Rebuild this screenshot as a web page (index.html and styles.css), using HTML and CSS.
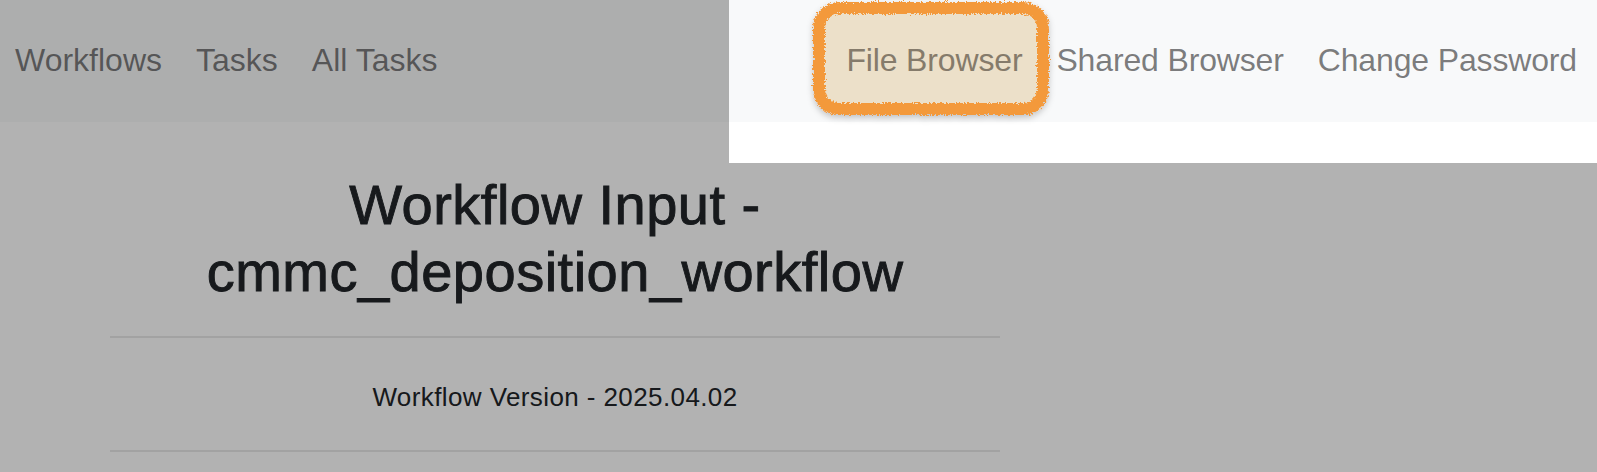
FILE: index.html
```html
<!DOCTYPE html>
<html lang="en">
<head>
<meta charset="utf-8">
<title>Workflow Input</title>
<link rel="stylesheet" href="styles.css">
</head>
<body>
<svg class="defs" width="0" height="0" aria-hidden="true">
  <filter id="rough" x="-10%" y="-15%" width="120%" height="130%">
    <feTurbulence type="fractalNoise" baseFrequency="0.6" numOctaves="2" seed="3" result="noise"/>
    <feDisplacementMap in="SourceGraphic" in2="noise" scale="6" xChannelSelector="R" yChannelSelector="G"/>
  </filter>
</svg>
<nav class="navbar">
  <ul class="nav nav-left">
    <li><a class="nav-link" href="#">Workflows</a></li>
    <li><a class="nav-link" href="#">Tasks</a></li>
    <li><a class="nav-link" href="#">All Tasks</a></li>
  </ul>
  <ul class="nav nav-right">
    <li><a class="nav-link is-highlighted" href="#">File Browser</a></li>
    <li><a class="nav-link" href="#">Shared Browser</a></li>
    <li><a class="nav-link" href="#">Change Password</a></li>
  </ul>
  <div class="spotlight"></div>
</nav>
<main class="content">
  <h1 class="title">Workflow Input - cmmc_deposition_workflow</h1>
  <div class="rule rule-top"></div>
  <p class="version">Workflow Version - 2025.04.02</p>
  <div class="rule rule-bottom"></div>
</main>
</body>
</html>
```
FILE: styles.css
```css
html {
  overflow: hidden;
  background: #ffffff;
}

body {
  margin: 0;
  padding: 0;
  min-height: 472px;
  background: #ffffff;
  font-family: "Liberation Sans", Arial, sans-serif;
  color: #212529;
}

.defs {
  position: absolute;
  width: 0;
  height: 0;
}

.navbar {
  position: relative;
  height: 122px;
  background: #f8f9fa;
  display: flex;
  justify-content: space-between;
  align-items: flex-start;
  padding: 36px 4px 0 0;
  box-sizing: border-box;
}

.nav {
  list-style: none;
  margin: 0;
  padding: 0;
  display: flex;
  gap: 2px;
}

.nav-left {
  margin-left: -1px;
}

.nav-link {
  display: block;
  position: relative;
  z-index: 0;
  padding: 0 16px;
  font-size: 32px;
  line-height: 48px;
  letter-spacing: -0.15px;
  color: rgba(0, 0, 0, 0.52);
  text-decoration: none;
}

.nav-left .nav-link {
  letter-spacing: 0;
}

.is-highlighted {
  color: #857b6b;
  z-index: 2;
}

.is-highlighted::before {
  content: "";
  position: absolute;
  left: -17px;
  right: -11px;
  top: -34px;
  bottom: -31px;
  z-index: -1;
  box-sizing: border-box;
  border: 12px solid #f3993b;
  border-radius: 26px;
  background: #ece0c9;
  filter: url(#rough) drop-shadow(0 3px 3px rgba(0, 0, 0, 0.22));
}

.spotlight {
  position: absolute;
  left: 729px;
  top: 0;
  width: 900px;
  height: 163px;
  box-shadow: 0 0 0 3000px rgba(0, 0, 0, 0.3);
  pointer-events: none;
  z-index: 1;
}

.content {
  margin-left: 110px;
  width: 890px;
  text-align: center;
}

.title {
  margin: 49px 0 0;
  font-size: 56px;
  line-height: 67px;
  font-weight: 400;
  letter-spacing: 0.5px;
  -webkit-text-stroke: 0.9px #212529;
  color: #212529;
}

.rule {
  border-top: 2px solid #e9e9e9;
}

.rule-top {
  margin-top: 31px;
}

.version {
  margin: 40px 0 0;
  font-size: 26px;
  line-height: 39px;
  letter-spacing: 0.4px;
}

.rule-bottom {
  margin-top: 33px;
}
```
